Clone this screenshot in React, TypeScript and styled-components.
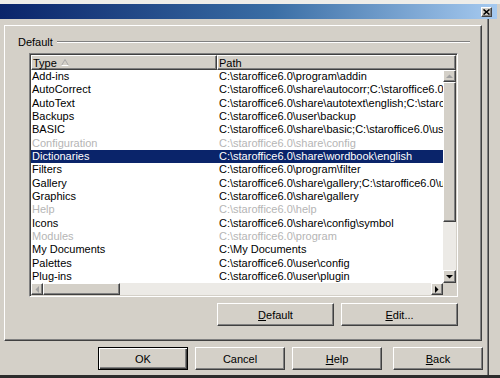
import React from 'react'
import styled, { createGlobalStyle, css } from 'styled-components'

const GlobalStyle = createGlobalStyle`
  html, body {
    margin: 0;
    padding: 0;
    background: #d4d0c8;
  }
  * {
    box-sizing: border-box;
  }
`

const font = css`
  font-family: 'Liberation Sans', Arial, sans-serif;
  font-size: 11px;
  color: #000;
`

const raised = css`
  background: #d4d0c8;
  border: 1px solid;
  border-color: #fff #404040 #404040 #fff;
  box-shadow: inset -1px -1px #808080;
`

const Root = styled.div`
  ${font}
  width: 500px;
  height: 378px;
  background: #d4d0c8;
  border-top: 4px solid #eeede9;
  border-bottom: 3px solid #2c2c2c;
  display: flex;
  flex-direction: column;
  overflow: hidden;
`

const TitleBar = styled.div`
  width: 497px;
  height: 15px;
  flex: 0 0 15px;
  background: linear-gradient(90deg, #0a246a 0%, #3a6ea5 55%, #a6caf0 100%);
  display: flex;
  align-items: center;
  justify-content: flex-end;
  padding-right: 5px;
`

const CloseButton = styled.div`
  ${raised}
  width: 11px;
  height: 10px;
  display: flex;
  align-items: center;
  justify-content: center;
`

const Frame = styled.div`
  flex: 1;
  width: 489px;
  border-right: 1px solid #404040;
  box-shadow: inset -1px 0 #808080;
  padding: 6px 0 0 4px;
  display: flex;
  flex-direction: column;
`

const Panel = styled.div`
  width: 478px;
  height: 316px;
  border: 1px solid;
  border-color: #fff #404040 #404040 #fff;
  box-shadow: inset -1px -1px #808080;
  padding: 9px 0 0 13px;
  display: flex;
  flex-direction: column;
`

const FixedLine = styled.div`
  display: flex;
  align-items: center;
  gap: 4px;
  height: 13px;
  margin-right: 11px;
`

const FixedLineRule = styled.div`
  flex: 1;
  height: 2px;
  border-top: 1px solid #808080;
  border-bottom: 1px solid #fff;
`

const ListBox = styled.div`
  width: 429px;
  height: 244px;
  margin: 5px 0 0 11px;
  border: 1px solid;
  border-color: #808080 #fff #fff #808080;
  box-shadow: inset 1px 1px #404040, inset -1px -1px #d4d0c8;
  padding: 1px;
  background: #fff;
  display: flex;
  flex-direction: column;
`

const Header = styled.div`
  display: flex;
  height: 15px;
  flex: 0 0 15px;
`

const HeaderCell = styled.div<{ $width?: number }>`
  ${raised}
  flex: ${(p) => (p.$width ? `0 0 ${p.$width}px` : '1')};
  height: 15px;
  display: flex;
  align-items: center;
  gap: 4px;
  padding-left: 1px;
  border-top-color: #fff;
  white-space: nowrap;
`

const ListBody = styled.div`
  display: flex;
  height: 213px;
  flex: 0 0 213px;
`

const Rows = styled.div`
  flex: 1;
  overflow: hidden;
`

const Row = styled.div<{ $selected?: boolean; $disabled?: boolean }>`
  display: flex;
  height: 13.33px;
  line-height: 13px;
  white-space: nowrap;
  color: ${(p) => (p.$disabled ? '#b5b5b5' : '#000')};
  ${(p) =>
    p.$selected &&
    css`
      background: #0a246a;
      color: #fff;
    `}
`

const TypeCell = styled.div`
  flex: 0 0 186px;
  padding-left: 1px;
  overflow: hidden;
`

const PathCell = styled.div`
  flex: 1;
  padding-left: 2px;
  overflow: hidden;
`

const VScroll = styled.div`
  flex: 0 0 13px;
  display: flex;
  flex-direction: column;
  background: #eceae6;
`

const HScrollRow = styled.div`
  display: flex;
  height: 12px;
  flex: 0 0 12px;
`

const HScroll = styled.div`
  flex: 1;
  display: flex;
  background: #eceae6;
`

const ScrollArrow = styled.div<{ $size: number }>`
  ${raised}
  flex: 0 0 ${(p) => p.$size}px;
  display: flex;
  align-items: center;
  justify-content: center;
`

const Thumb = styled.div<{ $size: number }>`
  ${raised}
  flex: 0 0 ${(p) => p.$size}px;
`

const Corner = styled.div`
  flex: 0 0 13px;
  background: #d4d0c8;
`

const ButtonRow = styled.div<{ $indent?: number }>`
  display: flex;
  gap: 7px;
  height: 23px;
  padding-left: ${(p) => p.$indent ?? 0}px;
`

const PanelButtons = styled(ButtonRow)`
  width: 429px;
  margin: 6px 0 0 11px;
  justify-content: flex-end;
`

const Footer = styled(ButtonRow)`
  margin-top: 6px;
`

const PushButton = styled.div<{ $width: number; $default?: boolean; $extraGap?: number }>`
  ${raised}
  width: ${(p) => p.$width}px;
  height: 23px;
  margin-left: ${(p) => p.$extraGap ?? 0}px;
  display: flex;
  align-items: center;
  justify-content: center;
  ${(p) =>
    p.$default &&
    css`
      border-color: #000;
      box-shadow: inset 1px 1px #fff, inset -1px -1px #404040, inset -2px -2px #808080;
    `}
`

type Arrow = 'up' | 'down' | 'left' | 'right'

const arrowPoints: Record<Arrow, string> = {
  up: '0,4 3.5,0.5 7,4',
  down: '0,0 7,0 3.5,3.5',
  left: '4,0 4,7 0.5,3.5',
  right: '0,0 0,7 3.5,3.5',
}

const ArrowGlyph = ({ dir, disabled }: { dir: Arrow; disabled?: boolean }) => {
  const vertical = dir === 'up' || dir === 'down'
  return (
    <svg width={vertical ? 7 : 4} height={vertical ? 4 : 7} viewBox={vertical ? '0 0 7 4' : '0 0 4 7'}>
      <polygon points={arrowPoints[dir]} fill={disabled ? '#a0a0a0' : '#000'} />
    </svg>
  )
}

const SortMark = () => (
  <svg width="8" height="7" viewBox="0 0 8 7">
    <polyline points="0.5,6.5 4,0.5 7.5,6.5" fill="none" stroke="#a8a8a8" strokeWidth="1" />
    <line x1="0.5" y1="6.5" x2="7.5" y2="6.5" stroke="#fff" strokeWidth="1" />
  </svg>
)

const CloseGlyph = () => (
  <svg width="7" height="6" viewBox="0 0 7 6">
    <path d="M0.5 0.5 L6.5 5.5 M6.5 0.5 L0.5 5.5" stroke="#000" strokeWidth="1.6" />
  </svg>
)

interface PathEntry {
  type: string
  path: string
  disabled?: boolean
  selected?: boolean
}

const entries: PathEntry[] = [
  { type: 'Add-ins', path: 'C:\\staroffice6.0\\program\\addin' },
  { type: 'AutoCorrect', path: 'C:\\staroffice6.0\\share\\autocorr;C:\\staroffice6.0\\user\\autocorr' },
  { type: 'AutoText', path: 'C:\\staroffice6.0\\share\\autotext\\english;C:\\staroffice6.0\\user\\autotext' },
  { type: 'Backups', path: 'C:\\staroffice6.0\\user\\backup' },
  { type: 'BASIC', path: 'C:\\staroffice6.0\\share\\basic;C:\\staroffice6.0\\user\\basic' },
  { type: 'Configuration', path: 'C:\\staroffice6.0\\share\\config', disabled: true },
  { type: 'Dictionaries', path: 'C:\\staroffice6.0\\share\\wordbook\\english', selected: true },
  { type: 'Filters', path: 'C:\\staroffice6.0\\program\\filter' },
  { type: 'Gallery', path: 'C:\\staroffice6.0\\share\\gallery;C:\\staroffice6.0\\user\\gallery' },
  { type: 'Graphics', path: 'C:\\staroffice6.0\\share\\gallery' },
  { type: 'Help', path: 'C:\\staroffice6.0\\help', disabled: true },
  { type: 'Icons', path: 'C:\\staroffice6.0\\share\\config\\symbol' },
  { type: 'Modules', path: 'C:\\staroffice6.0\\program', disabled: true },
  { type: 'My Documents', path: 'C:\\My Documents' },
  { type: 'Palettes', path: 'C:\\staroffice6.0\\user\\config' },
  { type: 'Plug-ins', path: 'C:\\staroffice6.0\\user\\plugin' },
]

const App = () => (
  <>
    <GlobalStyle />
    <Root>
      <TitleBar>
        <CloseButton>
          <CloseGlyph />
        </CloseButton>
      </TitleBar>
      <Frame>
        <Panel>
          <FixedLine>
            <span>Default</span>
            <FixedLineRule />
          </FixedLine>
          <ListBox>
            <Header>
              <HeaderCell $width={186}>
                Type <SortMark />
              </HeaderCell>
              <HeaderCell>Path</HeaderCell>
            </Header>
            <ListBody>
              <Rows>
                {entries.map((entry) => (
                  <Row key={entry.type} $selected={entry.selected} $disabled={entry.disabled}>
                    <TypeCell>{entry.type}</TypeCell>
                    <PathCell>{entry.path}</PathCell>
                  </Row>
                ))}
              </Rows>
              <VScroll>
                <ScrollArrow $size={12}>
                  <ArrowGlyph dir="up" disabled />
                </ScrollArrow>
                <Thumb $size={140} />
                <div style={{ flex: 1 }} />
                <ScrollArrow $size={13}>
                  <ArrowGlyph dir="down" />
                </ScrollArrow>
              </VScroll>
            </ListBody>
            <HScrollRow>
              <HScroll>
                <ScrollArrow $size={12}>
                  <ArrowGlyph dir="left" disabled />
                </ScrollArrow>
                <Thumb $size={77} />
                <div style={{ flex: 1 }} />
                <ScrollArrow $size={12}>
                  <ArrowGlyph dir="right" />
                </ScrollArrow>
              </HScroll>
              <Corner />
            </HScrollRow>
          </ListBox>
          <PanelButtons>
            <PushButton $width={117}>
              <u>D</u>efault
            </PushButton>
            <PushButton $width={117}>
              <u>E</u>dit...
            </PushButton>
          </PanelButtons>
        </Panel>
        <Footer $indent={94}>
          <PushButton $width={90} $default>
            OK
          </PushButton>
          <PushButton $width={90}>Cancel</PushButton>
          <PushButton $width={90}>
            <u>H</u>elp
          </PushButton>
          <PushButton $width={90} $extraGap={4}>
            <u>B</u>ack
          </PushButton>
        </Footer>
      </Frame>
    </Root>
  </>
)

export default App
